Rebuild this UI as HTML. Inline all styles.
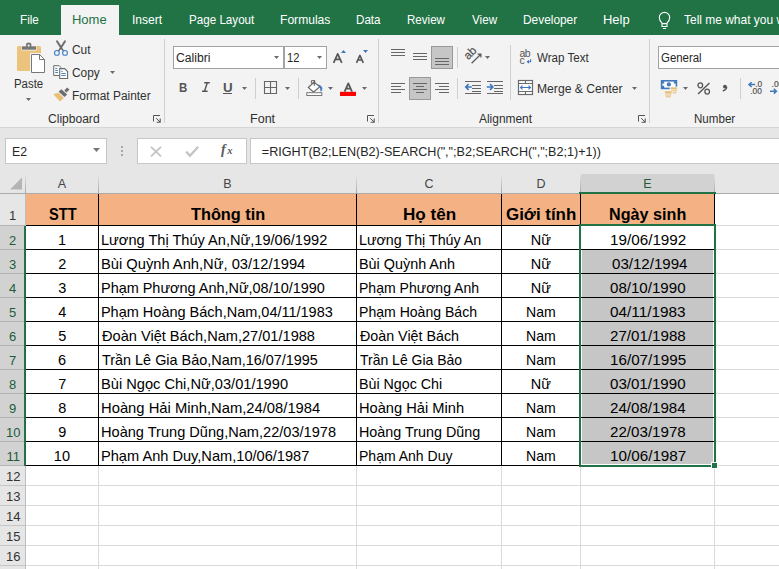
<!DOCTYPE html><html><head><meta charset="utf-8"><style>
html,body{margin:0;padding:0;}
body{width:779px;height:569px;overflow:hidden;position:relative;background:#fff;font-family:"Liberation Sans",sans-serif;}
.t{position:absolute;white-space:nowrap;line-height:1;}
.r{position:absolute;}
svg{position:absolute;overflow:visible;}
</style></head><body>
<div class="r" style="left:0px;top:0px;width:779px;height:35px;background:#217346;"></div>
<div class="r" style="left:61px;top:5px;width:58px;height:30px;background:#f3f3f3;"></div>
<div class="t" style="left:19.82px;top:13.00px;font-size:13px;color:#ffffff;transform:scaleX(0.8987);transform-origin:0 0;">File</div>
<div class="t" style="left:71.96px;top:13.00px;font-size:13px;color:#217346;">Home</div>
<div class="t" style="left:131.91px;top:13.00px;font-size:13px;color:#ffffff;transform:scaleX(0.9276);transform-origin:0 0;">Insert</div>
<div class="t" style="left:188.67px;top:13.00px;font-size:13px;color:#ffffff;transform:scaleX(0.8944);transform-origin:0 0;">Page Layout</div>
<div class="t" style="left:280.03px;top:13.00px;font-size:13px;color:#ffffff;transform:scaleX(0.9295);transform-origin:0 0;">Formulas</div>
<div class="t" style="left:356.07px;top:13.00px;font-size:13px;color:#ffffff;transform:scaleX(0.8943);transform-origin:0 0;">Data</div>
<div class="t" style="left:407.07px;top:13.00px;font-size:13px;color:#ffffff;transform:scaleX(0.8894);transform-origin:0 0;">Review</div>
<div class="t" style="left:471.94px;top:13.00px;font-size:13px;color:#ffffff;transform:scaleX(0.8965);transform-origin:0 0;">View</div>
<div class="t" style="left:523.05px;top:13.00px;font-size:13px;color:#ffffff;transform:scaleX(0.9141);transform-origin:0 0;">Developer</div>
<div class="t" style="left:602.97px;top:13.00px;font-size:13px;color:#ffffff;transform:scaleX(0.9938);transform-origin:0 0;">Help</div>
<div class="t" style="left:684.34px;top:13.00px;font-size:13px;color:#fff;transform:scaleX(0.92);transform-origin:0 0;">Tell me what you want to do</div>
<svg style="left:655px;top:9px" width="20" height="22" viewBox="0 0 20 22"><path d="M7 14.2C5.2 12.4 4.3 11 4.3 8.6A5.2 5.2 0 0 1 14.7 8.6C14.7 11 13.8 12.4 12 14.2V17.5H7z" fill="none" stroke="#fff" stroke-width="1.1"/><path d="M7 14.6h5M8 19.5h3" stroke="#fff" stroke-width="1.1"/></svg>
<div class="r" style="left:0px;top:35px;width:779px;height:92px;background:#f3f3f3;"></div>
<div class="r" style="left:0px;top:127px;width:779px;height:1px;background:#d5d5d5;"></div>
<div class="r" style="left:0px;top:128px;width:779px;height:46px;background:#e6e6e6;"></div>
<div class="r" style="left:164px;top:39px;width:1px;height:84px;background:#cfcfcf;"></div>
<div class="r" style="left:378px;top:39px;width:1px;height:84px;background:#cfcfcf;"></div>
<div class="r" style="left:649px;top:39px;width:1px;height:84px;background:#cfcfcf;"></div>
<div class="t" style="left:14.39px;top:78.00px;font-size:12px;color:#303030;transform:scaleX(0.9499);transform-origin:0 0;">Paste</div>
<div class="t" style="left:72.10px;top:44.00px;font-size:12px;color:#303030;transform:scaleX(0.9944);transform-origin:0 0;">Cut</div>
<div class="t" style="left:72.11px;top:67.00px;font-size:12px;color:#303030;transform:scaleX(0.9883);transform-origin:0 0;">Copy</div>
<div class="t" style="left:71.75px;top:90.00px;font-size:12px;color:#303030;transform:scaleX(0.9913);transform-origin:0 0;">Format Painter</div>
<div class="t" style="left:47.90px;top:113.00px;font-size:12px;color:#303030;transform:scaleX(1.0044);transform-origin:0 0;">Clipboard</div>
<div class="t" style="left:250.00px;top:113.00px;font-size:12px;color:#303030;transform:scaleX(1.0444);transform-origin:0 0;">Font</div>
<div class="t" style="left:479.00px;top:113.00px;font-size:12px;color:#303030;transform:scaleX(0.9947);transform-origin:0 0;">Alignment</div>
<div class="t" style="left:693.57px;top:113.00px;font-size:12px;color:#303030;transform:scaleX(0.9658);transform-origin:0 0;">Number</div>
<div class="t" style="left:537.24px;top:52.00px;font-size:12px;color:#303030;transform:scaleX(0.9663);transform-origin:0 0;">Wrap Text</div>
<div class="t" style="left:536.53px;top:83.00px;font-size:12px;color:#303030;transform:scaleX(1.0105);transform-origin:0 0;">Merge &amp; Center</div>
<svg style="left:10px;top:38px" width="40" height="40" viewBox="0 0 40 40"><rect x="7" y="8" width="24" height="25" rx="1.5" fill="#ebc37c"/>
<path d="M11.5 7.5h15v5h-15z" fill="#f3f3f3"/>
<path d="M12 8.3h14v3.4H12z" fill="#777"/>
<path d="M16 9V6.6a2.7 2.2 0 0 1 5.4 0V9z" fill="#777"/>
<circle cx="18.7" cy="7.6" r="1.1" fill="#f3f3f3"/>
<path d="M20 15h10l6 6v15H20z" fill="#f3f3f3"/>
<path d="M21.5 16.5h8l5 5v13h-13z" fill="#fff" stroke="#777" stroke-width="1"/>
<path d="M29.5 16.5v5h5" fill="none" stroke="#777" stroke-width="1"/></svg>
<svg style="left:25.5px;top:97.5px" width="5" height="3" viewBox="0 0 5 3"><path d="M0 0H5L2.5 3z" fill="#6b6b6b"/></svg>
<svg style="left:50px;top:38px" width="24" height="20" viewBox="0 0 24 20"><path d="M7 3.3L11.6 10.5M15 3.3L10.4 10.5" stroke="#6d6d6d" stroke-width="2" stroke-linecap="round"/>
<path d="M10.3 10.8L8.3 13M11.7 10.8L13.7 13" stroke="#6d6d6d" stroke-width="1.4"/>
<circle cx="6.9" cy="14.9" r="2.4" fill="none" stroke="#3c7fc5" stroke-width="1.1"/>
<circle cx="15" cy="14.9" r="2.4" fill="none" stroke="#3c7fc5" stroke-width="1.1"/></svg>
<svg style="left:50px;top:62px" width="24" height="20" viewBox="0 0 24 20"><path d="M3.7 3.7h5.5l1.6 1.6V13.5H3.7z" fill="#fff" stroke="#6b6b6b" stroke-width="1"/>
<path d="M5.2 6.4h2.2M5.2 8.5h2.8M5.2 10.5h2.8" stroke="#3f78bd" stroke-width="0.9"/>
<path d="M9.7 6.6h5l2.9 2.9v7h-7.9z" fill="#fff" stroke="#6b6b6b" stroke-width="1.1"/>
<path d="M11.2 9.4h1.5M11.2 11.5h4.6M11.2 13.5h4.6" stroke="#3f78bd" stroke-width="0.9"/></svg>
<svg style="left:110.0px;top:71.0px" width="5" height="3" viewBox="0 0 5 3"><path d="M0 0H5L2.5 3z" fill="#6b6b6b"/></svg>
<svg style="left:50px;top:84px" width="24" height="20" viewBox="0 0 24 20"><path d="M3.3 10.2L8.3 8.8L13.9 14.1L10 17.6z" fill="#e9bf78"/>
<path d="M8.6 7.8L11.4 5.2L17.2 10.4L14.6 13z" fill="#6d6d6d"/>
<path d="M14.3 6.4L17.1 3.4L19.5 5.6L16.6 8.6z" fill="#6d6d6d"/></svg>
<svg style="left:152.8px;top:115px" width="9" height="8" viewBox="0 0 9 8"><path d="M0.5 6.5V0.5H7" fill="none" stroke="#555" stroke-width="1"/><path d="M3.2 3.2L7 7" stroke="#555" stroke-width="1"/><path d="M3.6 7.2H7.2V3.6" fill="none" stroke="#555" stroke-width="1.1"/></svg>
<svg style="left:366.5px;top:115px" width="9" height="8" viewBox="0 0 9 8"><path d="M0.5 6.5V0.5H7" fill="none" stroke="#555" stroke-width="1"/><path d="M3.2 3.2L7 7" stroke="#555" stroke-width="1"/><path d="M3.6 7.2H7.2V3.6" fill="none" stroke="#555" stroke-width="1.1"/></svg>
<svg style="left:638.3px;top:115px" width="9" height="8" viewBox="0 0 9 8"><path d="M0.5 6.5V0.5H7" fill="none" stroke="#555" stroke-width="1"/><path d="M3.2 3.2L7 7" stroke="#555" stroke-width="1"/><path d="M3.6 7.2H7.2V3.6" fill="none" stroke="#555" stroke-width="1.1"/></svg>
<div class="r" style="left:173px;top:46px;width:111px;height:23px;border:1px solid #a2a2a2;background:#fff;box-sizing:border-box;"></div>
<div class="r" style="left:284px;top:46px;width:43px;height:23px;border:1px solid #a2a2a2;background:#fff;box-sizing:border-box;"></div>
<div class="t" style="left:176.19px;top:52.00px;font-size:12px;color:#262626;transform:scaleX(1.0129);transform-origin:0 0;">Calibri</div>
<div class="t" style="left:287.06px;top:52.00px;font-size:12px;color:#262626;transform:scaleX(0.9306);transform-origin:0 0;">12</div>
<svg style="left:274.0px;top:56.0px" width="5" height="3" viewBox="0 0 5 3"><path d="M0 0H5L2.5 3z" fill="#6b6b6b"/></svg>
<svg style="left:317.0px;top:56.0px" width="5" height="3" viewBox="0 0 5 3"><path d="M0 0H5L2.5 3z" fill="#6b6b6b"/></svg>
<svg style="left:330px;top:48px" width="42" height="18" viewBox="0 0 42 18"><path d="M3.6 14.8L7.7 5.8L11.8 14.8M5.2 11.3h5" fill="none" stroke="#555" stroke-width="1.7" stroke-linejoin="round"/>
<path d="M11 5H16L13.5 2z" fill="#3f78bd"/>
<path d="M26.5 14.8L29.9 7.4L33.3 14.8M27.8 12h4.2" fill="none" stroke="#555" stroke-width="1.6" stroke-linejoin="round"/>
<path d="M33 2H38L35.5 5z" fill="#3f78bd"/></svg>
<div class="t" style="left:179.25px;top:81.00px;font-size:13px;color:#555;font-weight:bold;transform:scaleX(0.8827);transform-origin:0 0;">B</div>
<svg style="left:201px;top:82px" width="10" height="11" viewBox="0 0 10 11"><path d="M3.2 0.8h5.6M1 9.2h5.6M6.3 0.8L3.5 9.2" fill="none" stroke="#555" stroke-width="1.4"/></svg>
<div class="t" style="left:222.80px;top:81.00px;font-size:13px;color:#555;font-weight:bold;transform:scaleX(1.0256);transform-origin:0 0;">U</div>
<div class="r" style="left:223px;top:93px;width:9px;height:1px;background:#555;"></div>
<svg style="left:242.0px;top:87.0px" width="5" height="3" viewBox="0 0 5 3"><path d="M0 0H5L2.5 3z" fill="#6b6b6b"/></svg>
<div class="r" style="left:255px;top:78px;width:1px;height:21px;background:#cfcfcf;"></div>
<svg style="left:263px;top:80px" width="15" height="15" viewBox="0 0 15 15"><path d="M1.5 1.5h12v12h-12zM7.5 1.5v12M1.5 7.5h12" fill="none" stroke="#666" stroke-width="1.1"/></svg>
<svg style="left:285.0px;top:87.0px" width="5" height="3" viewBox="0 0 5 3"><path d="M0 0H5L2.5 3z" fill="#6b6b6b"/></svg>
<div class="r" style="left:298px;top:78px;width:1px;height:21px;background:#cfcfcf;"></div>
<svg style="left:304px;top:78px" width="22" height="20" viewBox="0 0 22 20"><path d="M4.3 9.5L9.9 4.3L15.9 8.8L9.5 14z" fill="#fff" stroke="#666" stroke-width="1.1"/>
<path d="M7.4 2.6h3.4v2.6h-3.4z" fill="none" stroke="#666" stroke-width="1"/>
<path d="M10.3 2.5V7.8" stroke="#666" stroke-width="1.1"/>
<path d="M14 6.4C16.8 6.9 18.5 8.8 18.3 11.1C18.2 12.4 17.4 13.3 16.3 13.7C16.7 11.4 16.1 8.9 14 6.4z" fill="#3f78bd"/>
<rect x="2.8" y="14.7" width="15" height="2.8" fill="#fff" stroke="#777" stroke-width="1"/></svg>
<svg style="left:328.1px;top:87.0px" width="5" height="3" viewBox="0 0 5 3"><path d="M0 0H5L2.5 3z" fill="#6b6b6b"/></svg>
<svg style="left:340px;top:80px" width="17" height="17" viewBox="0 0 17 17"><path d="M4.6 11.6L8.3 3.4L12 11.6M5.9 8.7h4.8" fill="none" stroke="#595959" stroke-width="1.8" stroke-linejoin="round"/><rect x="0" y="11.8" width="16" height="4.2" fill="#f00"/></svg>
<svg style="left:361.8px;top:87.0px" width="5" height="3" viewBox="0 0 5 3"><path d="M0 0H5L2.5 3z" fill="#6b6b6b"/></svg>
<div class="r" style="left:431px;top:46px;width:22px;height:23px;border:1px solid #999;background:#c6c6c6;box-sizing:border-box;"></div>
<div class="r" style="left:457px;top:47px;width:1px;height:21px;background:#cfcfcf;"></div>
<div class="r" style="left:409px;top:77px;width:22px;height:23px;border:1px solid #999;background:#c6c6c6;box-sizing:border-box;"></div>
<div class="r" style="left:457px;top:78px;width:1px;height:21px;background:#cfcfcf;"></div>
<svg style="left:0;top:0" width="779" height="130"><path d="M391 49.5H405M391 52.5H405M391 55.5H405M413 53.5H427M413 56.5H427M413 59.5H427M435 58.5H449M435 61.5H449M435 64.5H449M391 83.5H405M391 86.5H401M391 89.5H405M391 92.5H401M413 83.5H427M416 86.5H424M413 89.5H427M416 92.5H424M435 83.5H449M439 86.5H449M435 89.5H449M439 92.5H449M465 81.5H481M472 85.5H481M472 88.5H481M472 91.5H481M465 93.5H481M487 81.5H503M494 85.5H503M494 88.5H503M494 91.5H503M487 93.5H503" stroke="#666" stroke-width="1"/></svg>
<svg style="left:464px;top:80px" width="40" height="16" viewBox="0 0 40 16"><path d="M1.8 7H7.8M4.6 4.2L1.8 7L4.6 9.8" fill="none" stroke="#3f78bd" stroke-width="1.7"/>
<path d="M22.8 7H28.8M26 4.2L28.8 7L26 9.8" fill="none" stroke="#3f78bd" stroke-width="1.7"/></svg>
<svg style="left:463px;top:46px" width="24" height="20" viewBox="0 0 24 20"><text x="0" y="0" transform="translate(5.2,14.2) rotate(-45)" font-family="Liberation Sans" font-size="11.5" fill="#555" stroke="#555" stroke-width="0.25">ab</text>
<path d="M8.6 17.3L17.6 8.5M14.6 8.2H17.9V11.5" fill="none" stroke="#555" stroke-width="1.2"/></svg>
<svg style="left:485.0px;top:56.0px" width="5" height="3" viewBox="0 0 5 3"><path d="M0 0H5L2.5 3z" fill="#6b6b6b"/></svg>
<div class="r" style="left:510px;top:45px;width:1px;height:55px;background:#cfcfcf;"></div>
<svg style="left:518px;top:46px" width="16" height="20" viewBox="0 0 16 20"><text x="1.4" y="10.8" font-family="Liberation Sans" font-size="10.5" fill="#555" letter-spacing="-0.4">ab</text>
<text x="1.4" y="17.6" font-family="Liberation Sans" font-size="10.5" fill="#555">c</text>
<path d="M12.6 13.2v2.6H9.6M10.9 14.4L9.4 15.8L10.9 17.2" fill="none" stroke="#3f78bd" stroke-width="1.1"/></svg>
<svg style="left:517px;top:79px" width="17" height="17" viewBox="0 0 17 17"><rect x="1.5" y="1.5" width="14" height="14" fill="#fff" stroke="#6b6b6b" stroke-width="1.2"/>
<path d="M1.5 4.5H15.5M1.5 12.5H15.5M8.5 1.5V4.5M8.5 12.5V15.5" stroke="#6b6b6b" stroke-width="1.1"/>
<path d="M3.5 8.5H13.5M5.5 6.6L3.5 8.5L5.5 10.4M11.5 6.6L13.5 8.5L11.5 10.4" fill="none" stroke="#3f78bd" stroke-width="1.1"/></svg>
<svg style="left:632.0px;top:86.7px" width="5" height="3" viewBox="0 0 5 3"><path d="M0 0H5L2.5 3z" fill="#6b6b6b"/></svg>
<div class="r" style="left:658px;top:46px;width:130px;height:23px;border:1px solid #a2a2a2;background:#fff;box-sizing:border-box;"></div>
<div class="t" style="left:660.83px;top:52.00px;font-size:12px;color:#262626;transform:scaleX(0.9520);transform-origin:0 0;">General</div>
<svg style="left:660px;top:79px" width="20" height="19" viewBox="0 0 20 19"><rect x="1.6" y="1.8" width="14.8" height="7.6" fill="#fff" stroke="#3f78bd" stroke-width="1.6"/>
<path d="M2 2.2h2.2v2.2H2zM13.8 2.2h2.2v2.2h-2.2zM2 6.8h2.2v2.2H2z" fill="#3f78bd"/>
<circle cx="8.9" cy="5.4" r="2.1" fill="#3f78bd"/>
<path d="M9.6 7.6h8.4v8H9.6z" fill="#f3f3f3"/>
<path d="M10.6 8.4h6.4v2h-6.4z" fill="#e9bb6c"/>
<path d="M11 11.8h6M11.8 13.8h4.6" stroke="#e9bb6c" stroke-width="1"/>
<path d="M4 11.6h8.6v7H4z" fill="#f3f3f3"/>
<path d="M5 12.3h6.6v2.2H5z" fill="#e9bb6c"/>
<path d="M5.2 16h6M5.8 17.8h5" stroke="#e9bb6c" stroke-width="1"/></svg>
<svg style="left:683.1px;top:87.0px" width="5" height="3" viewBox="0 0 5 3"><path d="M0 0H5L2.5 3z" fill="#6b6b6b"/></svg>
<svg style="left:696px;top:82px" width="16" height="13" viewBox="0 0 16 13"><path d="M2 12L13.5 1" stroke="#555" stroke-width="1.4"/><ellipse cx="4.3" cy="3.3" rx="2.3" ry="2.5" fill="none" stroke="#555" stroke-width="1.3"/><ellipse cx="11.2" cy="9.6" rx="2.3" ry="2.5" fill="none" stroke="#555" stroke-width="1.3"/></svg>
<svg style="left:720px;top:84px" width="8" height="8" viewBox="0 0 8 8"><circle cx="4.9" cy="2.6" r="1.9" fill="#555"/><path d="M6.6 2.8C6.6 5 5.2 6.3 2.8 6.9" fill="none" stroke="#555" stroke-width="1.5"/></svg>
<div class="r" style="left:740px;top:78px;width:1px;height:21px;background:#cfcfcf;"></div>
<svg style="left:747px;top:80px" width="32" height="16" viewBox="0 0 32 16"><path d="M2 4.6H8.2M4.6 2.2L2 4.6L4.6 7" fill="none" stroke="#3f78bd" stroke-width="1.5"/>
<text x="8.2" y="6.8" font-family="Liberation Sans" font-size="8.4" fill="#555" stroke="#555" stroke-width="0.2">.0</text>
<text x="3.2" y="13.8" font-family="Liberation Sans" font-size="8.4" fill="#555" stroke="#555" stroke-width="0.2">.00</text>
<text x="24.6" y="6.8" font-family="Liberation Sans" font-size="8.4" fill="#555" stroke="#555" stroke-width="0.2">.00</text>
<path d="M23 11.2H29.4M26.8 8.8L29.4 11.2L26.8 13.6" fill="none" stroke="#3f78bd" stroke-width="1.5"/></svg>
<div class="r" style="left:5px;top:138px;width:102px;height:26px;border:1px solid #c6c6c6;background:#fff;box-sizing:border-box;"></div>
<div class="t" style="left:11.72px;top:146.00px;font-size:12.5px;color:#262626;transform:scaleX(0.9835);transform-origin:0 0;">E2</div>
<svg style="left:93.0px;top:148.0px" width="7" height="4" viewBox="0 0 7 4"><path d="M0 0H7L3.5 4z" fill="#777"/></svg>
<div class="r" style="left:121px;top:146px;width:2px;height:2px;background:#a8a8a8;"></div>
<div class="r" style="left:121px;top:150px;width:2px;height:2px;background:#a8a8a8;"></div>
<div class="r" style="left:121px;top:154px;width:2px;height:2px;background:#a8a8a8;"></div>
<div class="r" style="left:137px;top:138px;width:110px;height:26px;border:1px solid #c6c6c6;background:#fff;box-sizing:border-box;"></div>
<div class="r" style="left:250px;top:138px;width:560px;height:26px;border:1px solid #c6c6c6;background:#fff;box-sizing:border-box;"></div>
<svg style="left:150px;top:146px" width="12" height="11" viewBox="0 0 12 11"><path d="M1 0.8l10 9.5M11 0.8L1 10.3" stroke="#c4c4c4" stroke-width="1.8"/></svg>
<svg style="left:185px;top:146px" width="14" height="11" viewBox="0 0 14 11"><path d="M1.2 5.6l3.8 4.2L13.2 0.8" fill="none" stroke="#c4c4c4" stroke-width="2.4"/></svg>
<div class="t" style="left:221px;top:143px;font-family:'Liberation Serif',serif;font-style:italic;font-weight:bold;font-size:14px;color:#5a5a5a;">f<span style="font-size:10.5px;position:relative;left:1.5px">x</span></div>
<div class="t" style="left:261.87px;top:146.00px;font-size:12.6px;color:#262626;">=RIGHT(B2;LEN(B2)-SEARCH(",";B2;SEARCH(",";B2;1)+1))</div>
<div class="r" style="left:0px;top:174px;width:779px;height:19px;background:#e6e6e6;"></div>
<div class="r" style="left:581px;top:174px;width:133px;height:19px;background:#d2d2d2;"></div>
<div class="r" style="left:0px;top:194px;width:25px;height:375px;background:#e6e6e6;"></div>
<div class="r" style="left:0px;top:226px;width:24px;height:239px;background:#d2d2d2;"></div>
<div class="r" style="left:0px;top:193px;width:779px;height:1px;background:#ababab;"></div>
<div class="r" style="left:25px;top:174px;width:1px;height:19px;background:linear-gradient(#e6e6e6,#a8a8a8);"></div>
<div class="r" style="left:98px;top:174px;width:1px;height:19px;background:linear-gradient(#e6e6e6,#a8a8a8);"></div>
<div class="r" style="left:356px;top:174px;width:1px;height:19px;background:linear-gradient(#e6e6e6,#a8a8a8);"></div>
<div class="r" style="left:501px;top:174px;width:1px;height:19px;background:linear-gradient(#e6e6e6,#a8a8a8);"></div>
<div class="r" style="left:580px;top:174px;width:1px;height:19px;background:linear-gradient(#e6e6e6,#a8a8a8);"></div>
<div class="r" style="left:714px;top:174px;width:1px;height:19px;background:linear-gradient(#e6e6e6,#a8a8a8);"></div>
<div class="r" style="left:25px;top:194px;width:1px;height:375px;background:#bdbdbd;"></div>
<div class="r" style="left:0px;top:225px;width:25px;height:1px;background:#b4b4b4;"></div>
<div class="r" style="left:0px;top:249px;width:25px;height:1px;background:#b4b4b4;"></div>
<div class="r" style="left:0px;top:273px;width:25px;height:1px;background:#b4b4b4;"></div>
<div class="r" style="left:0px;top:297px;width:25px;height:1px;background:#b4b4b4;"></div>
<div class="r" style="left:0px;top:321px;width:25px;height:1px;background:#b4b4b4;"></div>
<div class="r" style="left:0px;top:345px;width:25px;height:1px;background:#b4b4b4;"></div>
<div class="r" style="left:0px;top:369px;width:25px;height:1px;background:#b4b4b4;"></div>
<div class="r" style="left:0px;top:393px;width:25px;height:1px;background:#b4b4b4;"></div>
<div class="r" style="left:0px;top:417px;width:25px;height:1px;background:#b4b4b4;"></div>
<div class="r" style="left:0px;top:441px;width:25px;height:1px;background:#b4b4b4;"></div>
<div class="r" style="left:0px;top:465px;width:25px;height:1px;background:#b4b4b4;"></div>
<div class="r" style="left:0px;top:485px;width:25px;height:1px;background:#c6c6c6;"></div>
<div class="r" style="left:0px;top:505px;width:25px;height:1px;background:#c6c6c6;"></div>
<div class="r" style="left:0px;top:525px;width:25px;height:1px;background:#c6c6c6;"></div>
<div class="r" style="left:0px;top:545px;width:25px;height:1px;background:#c6c6c6;"></div>
<div class="r" style="left:0px;top:565px;width:25px;height:1px;background:#c6c6c6;"></div>
<svg style="left:9px;top:177px" width="14" height="13" viewBox="0 0 14 13"><path d="M13 0.5V12.5H1z" fill="#b4b4b4"/></svg>
<div class="t" style="left:12.0px;width:100px;text-align:center;top:178.00px;font-size:12.5px;color:#444444;">A</div>
<div class="t" style="left:177.5px;width:100px;text-align:center;top:178.00px;font-size:12.5px;color:#444444;">B</div>
<div class="t" style="left:379.0px;width:100px;text-align:center;top:178.00px;font-size:12.5px;color:#444444;">C</div>
<div class="t" style="left:491.0px;width:100px;text-align:center;top:178.00px;font-size:12.5px;color:#444444;">D</div>
<div class="t" style="left:597.5px;width:100px;text-align:center;top:178.00px;font-size:12.5px;color:#1d5c36;">E</div>
<div class="t" style="left:-37.4px;width:100px;text-align:center;top:209.00px;font-size:13px;color:#333333;">1</div>
<div class="t" style="left:-37.4px;width:100px;text-align:center;top:234.00px;font-size:13px;color:#1d5c36;">2</div>
<div class="t" style="left:-37.4px;width:100px;text-align:center;top:258.00px;font-size:13px;color:#1d5c36;">3</div>
<div class="t" style="left:-37.4px;width:100px;text-align:center;top:282.00px;font-size:13px;color:#1d5c36;">4</div>
<div class="t" style="left:-37.4px;width:100px;text-align:center;top:306.00px;font-size:13px;color:#1d5c36;">5</div>
<div class="t" style="left:-37.4px;width:100px;text-align:center;top:330.00px;font-size:13px;color:#1d5c36;">6</div>
<div class="t" style="left:-37.4px;width:100px;text-align:center;top:354.00px;font-size:13px;color:#1d5c36;">7</div>
<div class="t" style="left:-37.4px;width:100px;text-align:center;top:378.00px;font-size:13px;color:#1d5c36;">8</div>
<div class="t" style="left:-37.4px;width:100px;text-align:center;top:402.00px;font-size:13px;color:#1d5c36;">9</div>
<div class="t" style="left:-36.8px;width:100px;text-align:center;top:426.00px;font-size:13px;color:#1d5c36;">10</div>
<div class="t" style="left:-36.8px;width:100px;text-align:center;top:450.00px;font-size:13px;color:#1d5c36;">11</div>
<div class="t" style="left:-36.8px;width:100px;text-align:center;top:470.00px;font-size:13px;color:#333333;">12</div>
<div class="t" style="left:-36.8px;width:100px;text-align:center;top:490.00px;font-size:13px;color:#333333;">13</div>
<div class="t" style="left:-36.8px;width:100px;text-align:center;top:510.00px;font-size:13px;color:#333333;">14</div>
<div class="t" style="left:-36.8px;width:100px;text-align:center;top:530.00px;font-size:13px;color:#333333;">15</div>
<div class="t" style="left:-36.8px;width:100px;text-align:center;top:550.00px;font-size:13px;color:#333333;">16</div>
<div class="r" style="left:26px;top:194px;width:753px;height:375px;background:#fff;"></div>
<div class="r" style="left:98px;top:194px;width:1px;height:375px;background:#dadada;"></div>
<div class="r" style="left:356px;top:194px;width:1px;height:375px;background:#dadada;"></div>
<div class="r" style="left:501px;top:194px;width:1px;height:375px;background:#dadada;"></div>
<div class="r" style="left:580px;top:194px;width:1px;height:375px;background:#dadada;"></div>
<div class="r" style="left:714px;top:194px;width:1px;height:375px;background:#dadada;"></div>
<div class="r" style="left:26px;top:225px;width:753px;height:1px;background:#dadada;"></div>
<div class="r" style="left:26px;top:249px;width:753px;height:1px;background:#dadada;"></div>
<div class="r" style="left:26px;top:273px;width:753px;height:1px;background:#dadada;"></div>
<div class="r" style="left:26px;top:297px;width:753px;height:1px;background:#dadada;"></div>
<div class="r" style="left:26px;top:321px;width:753px;height:1px;background:#dadada;"></div>
<div class="r" style="left:26px;top:345px;width:753px;height:1px;background:#dadada;"></div>
<div class="r" style="left:26px;top:369px;width:753px;height:1px;background:#dadada;"></div>
<div class="r" style="left:26px;top:393px;width:753px;height:1px;background:#dadada;"></div>
<div class="r" style="left:26px;top:417px;width:753px;height:1px;background:#dadada;"></div>
<div class="r" style="left:26px;top:441px;width:753px;height:1px;background:#dadada;"></div>
<div class="r" style="left:26px;top:465px;width:753px;height:1px;background:#dadada;"></div>
<div class="r" style="left:26px;top:485px;width:753px;height:1px;background:#dadada;"></div>
<div class="r" style="left:26px;top:505px;width:753px;height:1px;background:#dadada;"></div>
<div class="r" style="left:26px;top:525px;width:753px;height:1px;background:#dadada;"></div>
<div class="r" style="left:26px;top:545px;width:753px;height:1px;background:#dadada;"></div>
<div class="r" style="left:26px;top:565px;width:753px;height:1px;background:#dadada;"></div>
<div class="r" style="left:26px;top:194px;width:688px;height:31px;background:#f4b183;"></div>
<div class="r" style="left:582px;top:250px;width:131px;height:214px;background:#c6c6c6;"></div>
<div class="r" style="left:26px;top:225px;width:688px;height:1px;background:#000;"></div>
<div class="r" style="left:26px;top:249px;width:688px;height:1px;background:#000;"></div>
<div class="r" style="left:26px;top:273px;width:688px;height:1px;background:#000;"></div>
<div class="r" style="left:26px;top:297px;width:688px;height:1px;background:#000;"></div>
<div class="r" style="left:26px;top:321px;width:688px;height:1px;background:#000;"></div>
<div class="r" style="left:26px;top:345px;width:688px;height:1px;background:#000;"></div>
<div class="r" style="left:26px;top:369px;width:688px;height:1px;background:#000;"></div>
<div class="r" style="left:26px;top:393px;width:688px;height:1px;background:#000;"></div>
<div class="r" style="left:26px;top:417px;width:688px;height:1px;background:#000;"></div>
<div class="r" style="left:26px;top:441px;width:688px;height:1px;background:#000;"></div>
<div class="r" style="left:26px;top:465px;width:688px;height:1px;background:#000;"></div>
<div class="r" style="left:98px;top:194px;width:1px;height:272px;background:#000;"></div>
<div class="r" style="left:356px;top:194px;width:1px;height:272px;background:#000;"></div>
<div class="r" style="left:501px;top:194px;width:1px;height:272px;background:#000;"></div>
<div class="r" style="left:580px;top:194px;width:1px;height:272px;background:#000;"></div>
<div class="r" style="left:714px;top:194px;width:1px;height:272px;background:#000;"></div>
<div class="t" style="left:48.66px;top:206.00px;font-size:17px;color:#000;font-weight:bold;transform:scaleX(0.8585);transform-origin:0 0;">STT</div>
<div class="t" style="left:191.24px;top:206.00px;font-size:17px;color:#000;font-weight:bold;transform:scaleX(0.9588);transform-origin:0 0;">Thông tin</div>
<div class="t" style="left:402.89px;top:206.00px;font-size:17px;color:#000;font-weight:bold;transform:scaleX(1.0050);transform-origin:0 0;">Họ tên</div>
<div class="t" style="left:506.02px;top:206.00px;font-size:17px;color:#000;font-weight:bold;transform:scaleX(0.9951);transform-origin:0 0;">Giới tính</div>
<div class="t" style="left:609.15px;top:206.00px;font-size:17px;color:#000;font-weight:bold;transform:scaleX(0.9515);transform-origin:0 0;">Ngày sinh</div>
<div class="t" style="left:57.96px;top:233.00px;font-size:14.5px;color:#000;">1</div>
<div class="t" style="left:100.93px;top:233.00px;font-size:14.5px;color:#000;transform:scaleX(1.0053);transform-origin:0 0;">Lương Thị Thúy An,Nữ,19/06/1992</div>
<div class="t" style="left:358.86px;top:233.00px;font-size:14.5px;color:#000;transform:scaleX(0.9839);transform-origin:0 0;">Lương Thị Thúy An</div>
<div class="t" style="left:530.76px;top:233.00px;font-size:14.5px;color:#000;">Nữ</div>
<div class="t" style="left:609.66px;top:233.00px;font-size:14.5px;color:#000;transform:scaleX(1.0514);transform-origin:0 0;">19/06/1992</div>
<div class="t" style="left:58.18px;top:257.00px;font-size:14.5px;color:#000;">2</div>
<div class="t" style="left:100.92px;top:257.00px;font-size:14.5px;color:#000;transform:scaleX(1.0132);transform-origin:0 0;">Bùi Quỳnh Anh,Nữ, 03/12/1994</div>
<div class="t" style="left:358.85px;top:257.00px;font-size:14.5px;color:#000;transform:scaleX(0.9914);transform-origin:0 0;">Bùi Quỳnh Anh</div>
<div class="t" style="left:530.76px;top:257.00px;font-size:14.5px;color:#000;">Nữ</div>
<div class="t" style="left:611.80px;top:257.00px;font-size:14.5px;color:#000;transform:scaleX(1.0397);transform-origin:0 0;">03/12/1994</div>
<div class="t" style="left:58.18px;top:281.00px;font-size:14.5px;color:#000;">3</div>
<div class="t" style="left:100.94px;top:281.00px;font-size:14.5px;color:#000;transform:scaleX(0.9957);transform-origin:0 0;">Phạm Phương Anh,Nữ,08/10/1990</div>
<div class="t" style="left:358.88px;top:281.00px;font-size:14.5px;color:#000;transform:scaleX(0.9682);transform-origin:0 0;">Phạm Phương Anh</div>
<div class="t" style="left:530.76px;top:281.00px;font-size:14.5px;color:#000;">Nữ</div>
<div class="t" style="left:610.20px;top:281.00px;font-size:14.5px;color:#000;transform:scaleX(1.0408);transform-origin:0 0;">08/10/1990</div>
<div class="t" style="left:58.25px;top:305.00px;font-size:14.5px;color:#000;">4</div>
<div class="t" style="left:100.94px;top:305.00px;font-size:14.5px;color:#000;">Phạm Hoàng Bách,Nam,04/11/1983</div>
<div class="t" style="left:358.88px;top:305.00px;font-size:14.5px;color:#000;transform:scaleX(0.9697);transform-origin:0 0;">Phạm Hoàng Bách</div>
<div class="t" style="left:526.22px;top:305.00px;font-size:14.5px;color:#000;transform:scaleX(0.9700);transform-origin:0 0;">Nam</div>
<div class="t" style="left:610.19px;top:305.00px;font-size:14.5px;color:#000;transform:scaleX(1.0579);transform-origin:0 0;">04/11/1983</div>
<div class="t" style="left:58.18px;top:329.00px;font-size:14.5px;color:#000;">5</div>
<div class="t" style="left:102.03px;top:329.00px;font-size:14.5px;color:#000;transform:scaleX(1.0059);transform-origin:0 0;">Đoàn Việt Bách,Nam,27/01/1988</div>
<div class="t" style="left:359.93px;top:329.00px;font-size:14.5px;color:#000;transform:scaleX(0.9852);transform-origin:0 0;">Đoàn Việt Bách</div>
<div class="t" style="left:526.22px;top:329.00px;font-size:14.5px;color:#000;transform:scaleX(0.9700);transform-origin:0 0;">Nam</div>
<div class="t" style="left:610.04px;top:329.00px;font-size:14.5px;color:#000;transform:scaleX(1.0440);transform-origin:0 0;">27/01/1988</div>
<div class="t" style="left:58.10px;top:353.00px;font-size:14.5px;color:#000;">6</div>
<div class="t" style="left:101.81px;top:353.00px;font-size:14.5px;color:#000;transform:scaleX(0.9940);transform-origin:0 0;">Trần Lê Gia Bảo,Nam,16/07/1995</div>
<div class="t" style="left:359.72px;top:353.00px;font-size:14.5px;color:#000;transform:scaleX(0.9640);transform-origin:0 0;">Trần Lê Gia Bảo</div>
<div class="t" style="left:526.22px;top:353.00px;font-size:14.5px;color:#000;transform:scaleX(0.9700);transform-origin:0 0;">Nam</div>
<div class="t" style="left:609.66px;top:353.00px;font-size:14.5px;color:#000;transform:scaleX(1.0493);transform-origin:0 0;">16/07/1995</div>
<div class="t" style="left:58.18px;top:377.00px;font-size:14.5px;color:#000;">7</div>
<div class="t" style="left:100.93px;top:377.00px;font-size:14.5px;color:#000;transform:scaleX(1.0086);transform-origin:0 0;">Bùi Ngọc Chi,Nữ,03/01/1990</div>
<div class="t" style="left:358.86px;top:377.00px;font-size:14.5px;color:#000;transform:scaleX(0.9830);transform-origin:0 0;">Bùi Ngọc Chi</div>
<div class="t" style="left:530.76px;top:377.00px;font-size:14.5px;color:#000;">Nữ</div>
<div class="t" style="left:610.20px;top:377.00px;font-size:14.5px;color:#000;transform:scaleX(1.0408);transform-origin:0 0;">03/01/1990</div>
<div class="t" style="left:58.14px;top:401.00px;font-size:14.5px;color:#000;">8</div>
<div class="t" style="left:100.92px;top:401.00px;font-size:14.5px;color:#000;transform:scaleX(1.0188);transform-origin:0 0;">Hoàng Hải Minh,Nam,24/08/1984</div>
<div class="t" style="left:358.83px;top:401.00px;font-size:14.5px;color:#000;transform:scaleX(1.0102);transform-origin:0 0;">Hoàng Hải Minh</div>
<div class="t" style="left:526.22px;top:401.00px;font-size:14.5px;color:#000;transform:scaleX(0.9700);transform-origin:0 0;">Nam</div>
<div class="t" style="left:610.04px;top:401.00px;font-size:14.5px;color:#000;transform:scaleX(1.0418);transform-origin:0 0;">24/08/1984</div>
<div class="t" style="left:58.18px;top:425.00px;font-size:14.5px;color:#000;">9</div>
<div class="t" style="left:100.93px;top:425.00px;font-size:14.5px;color:#000;transform:scaleX(1.0052);transform-origin:0 0;">Hoàng Trung Dũng,Nam,22/03/1978</div>
<div class="t" style="left:358.85px;top:425.00px;font-size:14.5px;color:#000;transform:scaleX(0.9890);transform-origin:0 0;">Hoàng Trung Dũng</div>
<div class="t" style="left:526.22px;top:425.00px;font-size:14.5px;color:#000;transform:scaleX(0.9700);transform-origin:0 0;">Nam</div>
<div class="t" style="left:610.04px;top:425.00px;font-size:14.5px;color:#000;transform:scaleX(1.0440);transform-origin:0 0;">22/03/1978</div>
<div class="t" style="left:53.86px;top:449.00px;font-size:14.5px;color:#000;">10</div>
<div class="t" style="left:100.93px;top:449.00px;font-size:14.5px;color:#000;transform:scaleX(1.0070);transform-origin:0 0;">Phạm Anh Duy,Nam,10/06/1987</div>
<div class="t" style="left:358.88px;top:449.00px;font-size:14.5px;color:#000;transform:scaleX(0.9659);transform-origin:0 0;">Phạm Anh Duy</div>
<div class="t" style="left:526.22px;top:449.00px;font-size:14.5px;color:#000;transform:scaleX(0.9700);transform-origin:0 0;">Nam</div>
<div class="t" style="left:609.66px;top:449.00px;font-size:14.5px;color:#000;transform:scaleX(1.0514);transform-origin:0 0;">10/06/1987</div>
<div class="r" style="left:579px;top:224px;width:137px;height:2px;background:#217346;"></div>
<div class="r" style="left:579px;top:224px;width:2px;height:243px;background:#217346;"></div>
<div class="r" style="left:714px;top:224px;width:2px;height:238px;background:#217346;"></div>
<div class="r" style="left:579px;top:465px;width:132px;height:2px;background:#217346;"></div>
<div class="r" style="left:711px;top:462px;width:7px;height:7px;background:#fff;"></div>
<div class="r" style="left:712px;top:463px;width:5px;height:5px;background:#217346;"></div>
<div class="r" style="left:24px;top:226px;width:2px;height:240px;background:#217346;"></div>
<div class="r" style="left:579px;top:192px;width:137px;height:2px;background:#217346;"></div>
</body></html>
